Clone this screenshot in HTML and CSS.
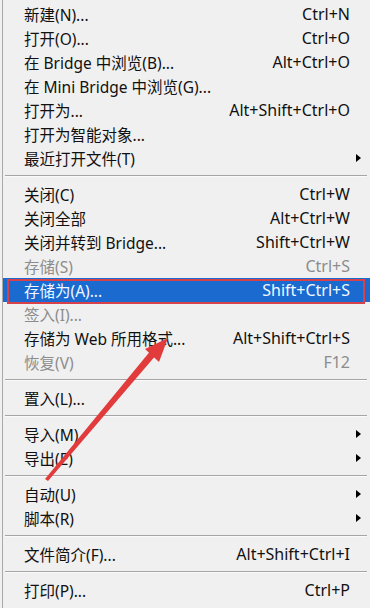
FILE: index.html
```html
<!DOCTYPE html>
<html lang="zh-CN">
<head>
  <meta charset="UTF-8" />
  <title>文件菜单</title>
  <link rel="stylesheet" href="styles.css">
</head>
<body>
  <div class="menu">
    <div class="item"><span class="label">新建(N)...</span><span class="key">Ctrl+N</span><span class="sub"></span></div>
    <div class="item"><span class="label">打开(O)...</span><span class="key">Ctrl+O</span><span class="sub"></span></div>
    <div class="item"><span class="label">在 Bridge 中浏览(B)...</span><span class="key">Alt+Ctrl+O</span><span class="sub"></span></div>
    <div class="item"><span class="label">在 Mini Bridge 中浏览(G)...</span><span class="key"></span><span class="sub"></span></div>
    <div class="item"><span class="label">打开为...</span><span class="key">Alt+Shift+Ctrl+O</span><span class="sub"></span></div>
    <div class="item"><span class="label">打开为智能对象...</span><span class="key"></span><span class="sub"></span></div>
    <div class="item"><span class="label">最近打开文件(T)</span><span class="key"></span><span class="sub"><i class="arrow"></i></span></div>
    <div class="sep"></div>
    <div class="item"><span class="label">关闭(C)</span><span class="key">Ctrl+W</span><span class="sub"></span></div>
    <div class="item"><span class="label">关闭全部</span><span class="key">Alt+Ctrl+W</span><span class="sub"></span></div>
    <div class="item"><span class="label">关闭并转到 Bridge...</span><span class="key">Shift+Ctrl+W</span><span class="sub"></span></div>
    <div class="item disabled"><span class="label">存储(S)</span><span class="key">Ctrl+S</span><span class="sub"></span></div>
    <div class="item active"><span class="label">存储为(A)...</span><span class="key">Shift+Ctrl+S</span><span class="sub"></span></div>
    <div class="item disabled"><span class="label">签入(I)...</span><span class="key"></span><span class="sub"></span></div>
    <div class="item"><span class="label">存储为 Web 所用格式...</span><span class="key">Alt+Shift+Ctrl+S</span><span class="sub"></span></div>
    <div class="item disabled"><span class="label">恢复(V)</span><span class="key">F12</span><span class="sub"></span></div>
    <div class="sep"></div>
    <div class="item"><span class="label">置入(L)...</span><span class="key"></span><span class="sub"></span></div>
    <div class="sep"></div>
    <div class="item"><span class="label">导入(M)</span><span class="key"></span><span class="sub"><i class="arrow"></i></span></div>
    <div class="item"><span class="label">导出(E)</span><span class="key"></span><span class="sub"><i class="arrow"></i></span></div>
    <div class="sep"></div>
    <div class="item"><span class="label">自动(U)</span><span class="key"></span><span class="sub"><i class="arrow"></i></span></div>
    <div class="item"><span class="label">脚本(R)</span><span class="key"></span><span class="sub"><i class="arrow"></i></span></div>
    <div class="sep"></div>
    <div class="item"><span class="label">文件简介(F)...</span><span class="key">Alt+Shift+Ctrl+I</span><span class="sub"></span></div>
    <div class="sep"></div>
    <div class="item"><span class="label">打印(P)...</span><span class="key">Ctrl+P</span><span class="sub"></span></div>

    <!-- annotation arrow drawn over the menu -->
    <svg class="pointer" width="370" height="608" viewBox="0 0 370 608">
      <polygon points="45,479 48,481 157,354 152,349" fill="#e23b3b"/>
      <polygon points="168,338 145,349 159,362" fill="#e23b3b"/>
    </svg>
  </div>
</body>
</html>
```
FILE: styles.css
```css
body {
  margin: 0;
  background: #f0f0f0;
  font-family: "Noto Sans", "Noto Sans CJK SC", sans-serif;
  font-size: 16px;
  color: #111;
}

.menu {
  position: relative;
  height: 608px;
  margin-left: 2px;
  padding-top: 2px;
  border-left: 1px solid #a9a9a9;
  box-sizing: border-box;
  background: #f0f0f0;
}

.item {
  display: grid;
  grid-template-columns: 1fr auto 20px;
  align-items: center;
  height: 24px;
  padding-left: 21px;
  white-space: nowrap;
  position: relative;
}

.label {
  font-size: 15.5px;
}

.key {
  text-align: right;
}

.sub {
  display: flex;
  align-items: center;
  padding-left: 6px;
}

.arrow {
  display: block;
  width: 0;
  height: 0;
  border-top: 4px solid transparent;
  border-bottom: 4px solid transparent;
  border-left: 5px solid #000;
}

.disabled {
  color: #8c8c8c;
}

.active {
  background: #1a6ad0;
  color: #f2f8ff;
}

.active::after {
  content: "";
  position: absolute;
  left: 4px;
  right: 5px;
  top: 1px;
  bottom: -2px;
  border: 2px solid #d9414a;
}

.sep {
  height: 12px;
  position: relative;
}

.sep::before {
  content: "";
  position: absolute;
  left: 2px;
  right: 3px;
  top: 5px;
  border-top: 1px solid #a5a5a5;
  border-bottom: 1px solid #fbfbfb;
}

.pointer {
  position: absolute;
  left: -3px;
  top: 0;
  pointer-events: none;
}
```
